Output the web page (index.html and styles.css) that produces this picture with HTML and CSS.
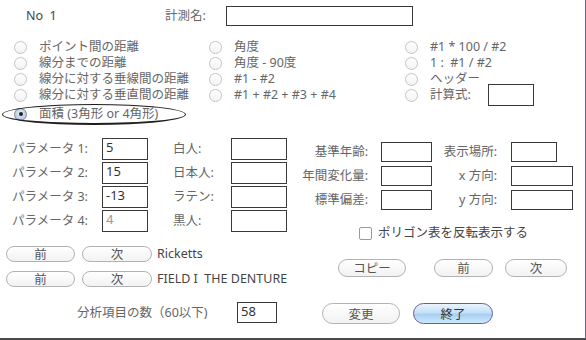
FILE: index.html
```html
<!DOCTYPE html>
<html lang="ja">
<head>
    <meta charset="UTF-8">
    <title>計測項目</title>
    <link rel="stylesheet" href="styles.css">
</head>
<body>
    <div class="window">
        <div class="head">
            <span class="no">No&nbsp;&nbsp;1</span>
            <span class="name-label">計測名:</span>
            <div class="box name-box"></div>
        </div>

        <div class="types">
            <div class="col col-a">
                <div class="radio"><span class="dot"></span>ポイント間の距離</div>
                <div class="radio"><span class="dot"></span>線分までの距離</div>
                <div class="radio"><span class="dot"></span>線分に対する垂線間の距離</div>
                <div class="radio"><span class="dot"></span>線分に対する垂直間の距離</div>
                <div class="radio last"><span class="dot on"></span>面積 (3角形 or 4角形)</div>
            </div>
            <div class="col col-b">
                <div class="radio"><span class="dot"></span>角度</div>
                <div class="radio"><span class="dot"></span>角度 - 90度</div>
                <div class="radio"><span class="dot"></span>#1 - #2</div>
                <div class="radio"><span class="dot"></span>#1 + #2 + #3 + #4</div>
            </div>
            <div class="col col-c">
                <div class="radio"><span class="dot"></span>#1 * 100 / #2</div>
                <div class="radio"><span class="dot"></span>1 :&nbsp;&nbsp;#1 / #2</div>
                <div class="radio"><span class="dot"></span>ヘッダー</div>
                <div class="radio"><span class="dot"></span>計算式:<span class="box formula-box"></span></div>
            </div>
        </div>
        <!-- hand drawn mark round the chosen item -->
        <div class="ellipse"></div>

        <div class="lower">
            <div class="left">
                <div class="params">
                    <div class="prow">
                        <span class="plabel">パラメータ 1:</span><span class="box pbox">5</span>
                        <span class="glabel">白人:</span><span class="box gbox"></span>
                    </div>
                    <div class="prow">
                        <span class="plabel">パラメータ 2:</span><span class="box pbox">15</span>
                        <span class="glabel">日本人:</span><span class="box gbox"></span>
                    </div>
                    <div class="prow">
                        <span class="plabel">パラメータ 3:</span><span class="box pbox">-13</span>
                        <span class="glabel">ラテン:</span><span class="box gbox"></span>
                    </div>
                    <div class="prow">
                        <span class="plabel">パラメータ 4:</span><span class="box pbox dim">4</span>
                        <span class="glabel">黒人:</span><span class="box gbox"></span>
                    </div>
                </div>

                <div class="nav-row first">
                    <button class="btn prev">前</button>
                    <button class="btn next">次</button>
                    <span class="nav-text">Ricketts</span>
                </div>
                <div class="nav-row">
                    <button class="btn prev">前</button>
                    <button class="btn next">次</button>
                    <span class="nav-text">FIELD I&nbsp;&nbsp;THE DENTURE</span>
                </div>

                <div class="count-row">
                    <span class="count-label">分析項目の数（60以下)</span>
                    <span class="box count-box">58</span>
                </div>
            </div>

            <div class="right">
                <div class="stats">
                    <div class="srow">
                        <span class="slabel">基準年齢:</span><span class="box sbox"></span>
                        <span class="tlabel">表示場所:</span><span class="box tbox short"></span>
                    </div>
                    <div class="srow">
                        <span class="slabel">年間変化量:</span><span class="box sbox"></span>
                        <span class="tlabel">x 方向:</span><span class="box tbox"></span>
                    </div>
                    <div class="srow">
                        <span class="slabel">標準偏差:</span><span class="box sbox"></span>
                        <span class="tlabel">y 方向:</span><span class="box tbox"></span>
                    </div>
                </div>

                <div class="check-row">
                    <span class="check"></span>ポリゴン表を反転表示する
                </div>

                <div class="copy-row">
                    <button class="btn copy">コピー</button>
                    <button class="btn rprev">前</button>
                    <button class="btn rnext">次</button>
                </div>

                <div class="end-row">
                    <button class="btn change">変更</button>
                    <button class="btn done">終了</button>
                </div>
            </div>
        </div>
    </div>
</body>
</html>
```

FILE: styles.css
```css
/* ===== General ===== */
body {
    margin: 0;
    background: #fff;
}

.window {
    position: relative;
    width: 585px;
    height: 338px;
    border-right: 1px solid #6e6680;
    border-bottom: 2px solid #4a4a4a;
    font-family: "Noto Sans", "Noto Sans CJK JP", sans-serif;
    font-size: 12.5px;
    line-height: 16px;
    color: #666;
    overflow: hidden;
}

.box {
    display: inline-block;
    flex: none;
    box-sizing: border-box;
    border: 1px solid #3a3a3a;
    background: #fff;
    color: #333;
    font-size: 13px;
    line-height: 16px;
    padding: 0 3px;
}

/* ===== Header ===== */
.head {
    display: flex;
    align-items: center;
    padding-top: 6px;
    height: 20px;
}

.no {
    margin-left: 26px;
    width: 139px;
    color: #444;
}

.name-label {
    width: 61px;
}

.name-box {
    width: 187px;
    height: 20px;
}

/* ===== Measurement types ===== */
.types {
    display: flex;
    margin-top: 13px;
}

.col-a {
    padding-left: 14px;
    width: 195px;
}

.col-b {
    width: 196px;
}

.radio {
    display: flex;
    align-items: center;
    height: 16px;
    line-height: 16px;
    white-space: nowrap;
}

.radio.last {
    margin-top: 3px;
}

.dot {
    position: relative;
    flex: none;
    box-sizing: border-box;
    width: 13px;
    height: 13px;
    border: 1px solid #c4c4c4;
    border-radius: 50%;
    background: linear-gradient(#fff, #f3f3f3);
    margin-right: 12px;
}

.dot.on {
    border-color: #7d8aa0;
    background: radial-gradient(circle at 50% 40%, #e8f1fb, #9fb6d2);
}

.dot.on::after {
    content: '';
    position: absolute;
    width: 4px;
    height: 4px;
    border-radius: 50%;
    background: #222;
    left: 3.5px;
    top: 3.5px;
}

.formula-box {
    width: 46px;
    height: 22px;
    margin-left: 17px;
}

.ellipse {
    position: absolute;
    left: 2px;
    top: 104px;
    width: 184px;
    height: 21px;
    box-sizing: border-box;
    border: 1.5px solid #1e1e1e;
    border-bottom-width: 2.5px;
    border-radius: 50%;
}

/* ===== Lower part ===== */
.lower {
    display: flex;
    margin-top: 16px;
}

.left {
    width: 300px;
}

.right {
    flex: 1;
}

/* parameters */
.params {
    display: flex;
    flex-direction: column;
    gap: 2px;
    padding-left: 12px;
}

.prow {
    display: flex;
    align-items: center;
    height: 22px;
}

.plabel {
    width: 90px;
}

.pbox {
    width: 46px;
    height: 22px;
}

.pbox.dim {
    color: #999;
}

.glabel {
    margin-left: 25px;
    width: 58px;
}

.gbox {
    width: 56px;
    height: 22px;
}

/* nav buttons */
.btn {
    box-sizing: border-box;
    border: 1px solid #b2b2b2;
    border-radius: 10px;
    background: linear-gradient(#fff, #f2f2f2);
    font-family: "Noto Sans CJK JP", sans-serif;
    font-size: 12.5px;
    color: #555;
    padding: 0;
    line-height: 14px;
}

.nav-row {
    display: flex;
    align-items: center;
    height: 16px;
    padding-left: 6px;
    margin-top: 9px;
}

.nav-row.first {
    margin-top: 14px;
}

.nav-row .btn {
    height: 16px;
}

.prev {
    width: 69px;
}

.next {
    width: 70px;
    margin-left: 7px;
}

.nav-text {
    margin-left: 5px;
    color: #444;
    white-space: nowrap;
}

.count-row {
    display: flex;
    align-items: center;
    height: 21px;
    padding-left: 77px;
    margin-top: 15px;
}

.count-label {
    width: 160px;
}

.count-box {
    width: 40px;
    height: 21px;
}

/* right side */
.stats {
    display: flex;
    flex-direction: column;
    gap: 4px;
    padding-top: 4px;
}

.srow {
    display: flex;
    align-items: center;
    height: 20px;
}

.slabel {
    width: 68px;
    text-align: right;
    white-space: nowrap;
}

.sbox {
    width: 51px;
    height: 20px;
    margin-left: 13px;
}

.tlabel {
    width: 65px;
    text-align: right;
}

.tbox {
    width: 62px;
    height: 20px;
    margin-left: 14px;
}

.tbox.short {
    width: 46px;
}

.check-row {
    display: flex;
    align-items: center;
    height: 14px;
    padding-left: 59px;
    margin-top: 16px;
    color: #444;
}

.check {
    box-sizing: border-box;
    width: 13px;
    height: 13px;
    border: 1px solid #9a9a9a;
    border-radius: 2px;
    margin-right: 6px;
}

.copy-row {
    display: flex;
    height: 18px;
    padding-left: 38px;
    margin-top: 19px;
}

.copy-row .btn {
    height: 18px;
}

.copy {
    width: 68px;
}

.rprev {
    width: 59px;
    margin-left: 28px;
}

.rnext {
    width: 62px;
    margin-left: 12px;
}

.end-row {
    display: flex;
    height: 21px;
    padding-left: 22px;
    margin-top: 26px;
}

.end-row .btn {
    height: 21px;
    border-radius: 11px;
}

.change {
    width: 78px;
}

.done {
    width: 80px;
    margin-left: 13px;
    border-color: #6b5c9c;
    background: linear-gradient(#eaf4fd 0%, #c4e0f8 45%, #a7d0f3 55%, #cfe8fb 100%);
    color: #333;
}
```
